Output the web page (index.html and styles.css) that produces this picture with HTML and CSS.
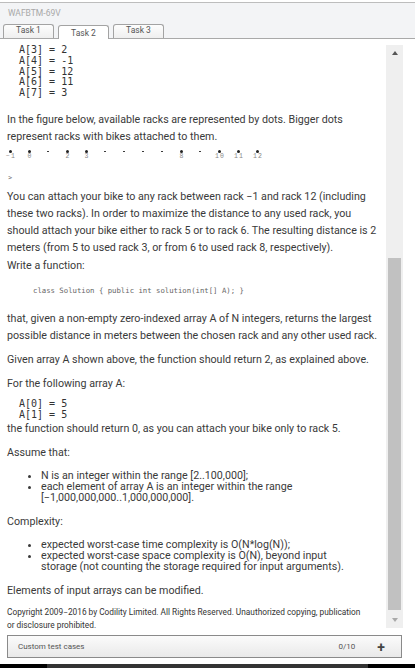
FILE: index.html
```html
<!DOCTYPE html>
<html>
<head>
<meta charset="utf-8">
<link rel="stylesheet" href="styles.css">
</head>
<body>
<div class="header">
  <div class="title">WAFBTM-69V</div>
  <div class="tabs">
    <div class="tab">Task 1</div>
    <div class="tab active">Task 2</div>
    <div class="tab">Task 3</div>
  </div>
</div>
<div class="panel">
  <div class="content">
<pre class="arr">A[3] = 2
A[4] = -1
A[5] = 12
A[6] = 11
A[7] = 3</pre>
    <p class="p1">In the figure below, available racks are represented by dots. Bigger dots represent racks with bikes attached to them.</p>
    <div class="racks">
      <div class="rack big"><i></i><span>−1</span></div>
      <div class="rack big"><i></i><span>0</span></div>
      <div class="rack"><i></i><span></span></div>
      <div class="rack big"><i></i><span>2</span></div>
      <div class="rack big"><i></i><span>3</span></div>
      <div class="rack"><i></i><span></span></div>
      <div class="rack"><i></i><span></span></div>
      <div class="rack"><i></i><span></span></div>
      <div class="rack"><i></i><span></span></div>
      <div class="rack big"><i></i><span>8</span></div>
      <div class="rack"><i></i><span></span></div>
      <div class="rack big"><i></i><span>10</span></div>
      <div class="rack big"><i></i><span>11</span></div>
      <div class="rack big"><i></i><span>12</span></div>
    </div>
    <p class="gt">&gt;</p>
    <p class="p2">You can attach your bike to any rack between rack −1 and rack 12 (including these two racks). In order to maximize the distance to any used rack, you should attach your bike either to rack 5 or to rack 6. The resulting distance is 2 meters (from 5 to used rack 3, or from 6 to used rack 8, respectively).</p>
    <p>Write a function:</p>
    <pre class="sig">class Solution { public int solution(int[] A); }</pre>
    <p>that, given a non-empty zero-indexed array A of N integers, returns the largest possible distance in meters between the chosen rack and any other used rack.</p>
    <p>Given array A shown above, the function should return 2, as explained above.</p>
    <p>For the following array A:</p>
<pre class="arr arr2">A[0] = 5
A[1] = 5</pre>
    <p>the function should return 0, as you can attach your bike only to rack 5.</p>
    <p>Assume that:</p>
    <ul>
      <li>N is an integer within the range [2..100,000];</li>
      <li>each element of array A is an integer within the range [−1,000,000,000..1,000,000,000].</li>
    </ul>
    <p>Complexity:</p>
    <ul>
      <li>expected worst-case time complexity is O(N*log(N));</li>
      <li>expected worst-case space complexity is O(N), beyond input storage (not counting the storage required for input arguments).</li>
    </ul>
    <p>Elements of input arrays can be modified.</p>
    <p class="copy">Copyright 2009−2016 by Codility Limited. All Rights Reserved. Unauthorized copying, publication or disclosure prohibited.</p>
  </div>
  <div class="scrollbar">
    <div class="arrow up"></div>
    <div class="track"><div class="thumb"></div></div>
    <div class="arrow down"></div>
  </div>
</div>
<div class="footer">
  <div class="custom">
    <span class="label">Custom test cases</span>
    <span class="count">0/10</span>
    <span class="plus">+</span>
  </div>
</div>
<div class="videobar"><div class="mid"></div></div>
</body>
</html>
```
FILE: styles.css
```css
html, body {
  margin: 0;
  padding: 0;
  background: #fff;
  width: 415px;
  height: 668px;
  overflow: hidden;
  font-family: Roboto, "Liberation Sans", sans-serif;
  color: #3a3a3a;
}

.header {
  margin-top: 2px;
  border-top: 1px solid #bdbdbd;
  border-bottom: 1px solid #a9a9a9;
  background: #f3f4f6;
  height: 35px;
}
.title {
  font-size: 8.5px;
  color: #a8a8a8;
  padding: 5px 0 0 8px;
  height: 14px;
  line-height: 10px;
  box-sizing: border-box;
}
.tabs {
  display: flex;
  padding-left: 3px;
  gap: 4px;
  height: 21px;
  align-items: flex-end;
}
.tab {
  width: 49px;
  height: 13px;
  border: 1px solid #a3a3a3;
  border-bottom: none;
  border-radius: 3px 3px 0 0;
  background: linear-gradient(#fdfdfd, #efefef);
  font-size: 8.5px;
  color: #555;
  text-align: center;
  line-height: 11px;
}
.tab.active {
  background: #fff;
  height: 13px;
  margin-bottom: -1px;
  line-height: 15px;
}

.panel {
  display: flex;
  height: 592px;
  padding-top: 6px;
  box-sizing: border-box;
}
.content {
  flex: 1;
  padding: 0 4px 0 7px;
  overflow: hidden;
  font-size: 10.7px;
  line-height: 17px;
}
.content p {
  margin: 0 0 7px;
}
pre.arr {
  font-family: "DejaVu Sans Mono", monospace;
  font-size: 10px;
  line-height: 10.75px;
  margin: 0 0 12px 12px;
  color: #333;
}
pre.arr2 { margin-top: 4px; margin-bottom: 0; }
.content .p1 { margin-bottom: 3px; }
.content .p2 { margin-bottom: 1px; }

.racks {
  display: flex;
  margin-left: -6.5px;
  height: 14px;
}
.rack {
  width: 19px;
  display: flex;
  flex-direction: column;
  align-items: center;
}
.rack i {
  display: block;
  width: 1.5px;
  height: 1.5px;
  border-radius: 50%;
  background: #222;
  margin-top: 3px;
  margin-bottom: 1px;
}
.rack.big i {
  width: 3px;
  height: 3px;
  margin-top: 2px;
  margin-bottom: 0.5px;
}
.rack span {
  font-family: "Liberation Mono", monospace;
  font-size: 6.5px;
  line-height: 8px;
  color: #888;
  padding-left: 2px;
  letter-spacing: 1px;
}
.content .gt {
  color: #777;
  font-size: 8px;
  margin: 7px 0 2px 1px;
}
pre.sig {
  font-family: "DejaVu Sans Mono", monospace;
  font-size: 7.3px;
  line-height: 10px;
  color: #666;
  margin: 12px 0 14px 26px;
}
ul {
  margin: 9px 20px 10px 0;
  padding-left: 34px;
  line-height: 11px;
}
li { padding: 0; }
.content .copy {
  font-size: 8.3px;
  line-height: 12.5px;
  color: #333;
  margin-right: 18px;
  margin-bottom: 0;
}

.scrollbar {
  width: 17px;
  margin: 0 12px 3px 0;
  background: #efefef;
  display: flex;
  flex-direction: column;
  align-items: center;
}
.arrow {
  width: 0;
  height: 0;
  border-left: 3.5px solid transparent;
  border-right: 3.5px solid transparent;
}
.arrow.up {
  border-bottom: 4px solid #555;
  margin: 6px 0 0;
}
.track {
  flex: 1;
  width: 13px;
  padding-top: 203px;
  padding-bottom: 4px;
  display: flex;
  flex-direction: column;
}
.thumb {
  flex: 1;
  background: #c1c1c1;
}
.arrow.down {
  border-top: 4px solid #a9a9a9;
  margin: 4px 0 6px;
}

.footer {
  padding: 4px 13px 0 7px;
  height: 33px;
  box-sizing: border-box;
}
.custom {
  height: 23px;
  box-sizing: border-box;
  border: 1px solid #8a8a8a;
  background: linear-gradient(#fbfbfb, #e9e9e9);
  display: flex;
  align-items: center;
  padding: 0 16px 0 10px;
  font-size: 8px;
  color: #555;
}
.label { flex: 1; }
.count { margin-right: 22px; }
.plus {
  font-size: 14px;
  font-weight: bold;
  color: #444;
  line-height: 14px;
}
.videobar {
  height: 4px;
  background: #000;
  padding: 0 47px;
}
.videobar .mid {
  height: 4px;
  background: #333;
}
```
